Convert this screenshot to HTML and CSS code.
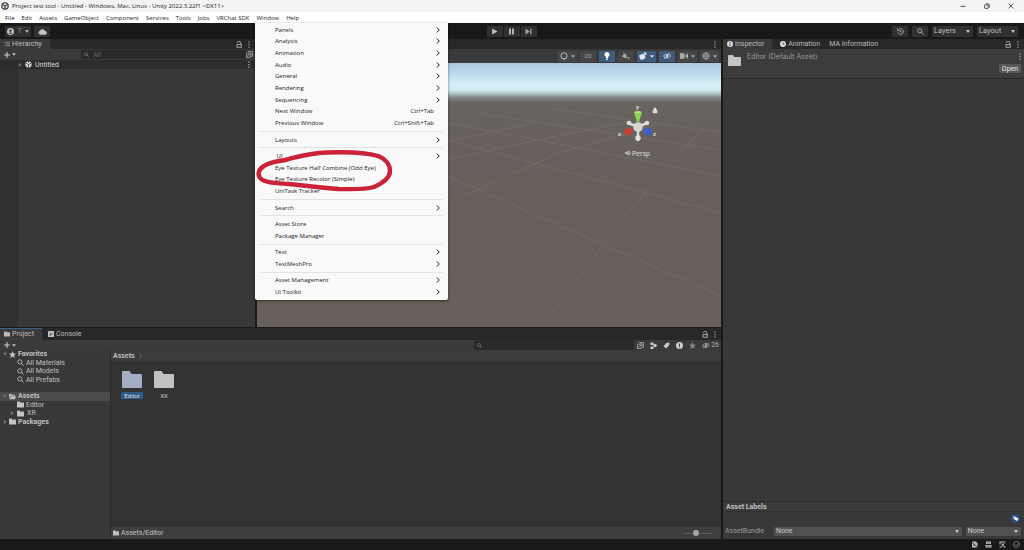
FILE: index.html
```html
<!DOCTYPE html>
<html lang="en">
<head>
<meta charset="utf-8">
<title>Project test tool - Untitled</title>
<link rel="stylesheet" href="styles.css">
</head>
<body>
<svg class="sprite" aria-hidden="true">
  <symbol id="folder" viewBox="0 0 20 17"><path d="M1 0h6.500l2 3H19q1 0 1 1v12q0 1-1 1H1q-1 0-1-1V1q0-1 1-1z" fill="currentColor"/></symbol>
  <symbol id="folder-open" viewBox="0 0 20 16"><path d="M0 13V1h7l2 2h8v3H5z" fill="currentColor"/><path d="M5.500 7H20l-3 9H1z" fill="currentColor"/></symbol>
  <symbol id="search" viewBox="0 0 16 16"><circle cx="6.500" cy="6.500" r="4.800" fill="none" stroke="currentColor" stroke-width="1.800"/><path d="M10 10l5 5" stroke="currentColor" stroke-width="2.200"/></symbol>
  <symbol id="lock" viewBox="0 0 12 14"><path d="M2.500 4V3q0-2 3.500-2t3.500 2v4" fill="none" stroke="currentColor" stroke-width="1.600"/><rect x="2" y="7" width="8.500" height="5.500" fill="none" stroke="currentColor" stroke-width="1.600"/></symbol>
  <symbol id="dots" viewBox="0 0 4 14"><path d="M1 1h2v2.500H1zM1 6h2v2.500H1zM1 11h2v2.500H1z" fill="currentColor"/></symbol>
  <symbol id="fold" viewBox="0 0 10 10"><path d="M2 0l7 5-7 5z" fill="currentColor"/></symbol>
  <symbol id="down" viewBox="0 0 10 6"><path d="M0 0h10L5 6z" fill="currentColor"/></symbol>
  <symbol id="pick" viewBox="0 0 16 16"><path d="M4 1h11v11H8M1 5v10h9" fill="none" stroke="currentColor" stroke-width="1.500"/><circle cx="9" cy="6" r="2.300" fill="none" stroke="currentColor" stroke-width="1.500"/><path d="M7 8l-5 5M3 5h3M11 9h3" stroke="currentColor" stroke-width="1.500"/></symbol>
  <symbol id="chev" viewBox="0 0 8 12"><path d="M1.500 1l5 5-5 5" fill="none" stroke="currentColor" stroke-width="2"/></symbol>
  <symbol id="eye-off" viewBox="0 0 20 16"><path d="M1 8q9-10 18 0-9 10-18 0z" fill="none" stroke="currentColor" stroke-width="2"/><circle cx="10" cy="8" r="3" fill="currentColor"/><path d="M3 15L17 1" stroke="currentColor" stroke-width="2"/></symbol>
  <symbol id="unity" viewBox="0 0 20 20"><path d="M10 0l8.700 5v10L10 20l-8.700-5V5z" fill="currentColor"/><path d="M10 10V20M10 10L1 5M10 10l9-5M10 0v5M1 15l4-2M19 15l-4-2" stroke="#2a2a2a" stroke-width="2.400"/></symbol>
  <symbol id="star" viewBox="0 0 20 20"><path d="M10 0l3 6.800 7 .7-5.300 4.800L16.300 20 10 16l-6.300 4 1.600-7.700L0 7.500l7-.7z" fill="currentColor"/></symbol>
  <symbol id="tag" viewBox="0 0 20 16"><path d="M1 1h7l11 9-6 6L1 8z" fill="currentColor"/><circle cx="4.500" cy="4.500" r="1.500" fill="#25364d"/></symbol>
</svg>

<header class="titlebar">
  <svg class="app-icon" viewBox="0 0 16 16"><circle cx="8" cy="8" r="7.500" fill="#333"/><path d="M8 2l5 3v6l-5 3-5-3V5z" fill="#ddd"/><path d="M8 8v6M8 8L3 5M8 8l5-3" stroke="#333" stroke-width="2"/></svg>
  <h1>Project test tool - Untitled - Windows, Mac, Linux - Unity 2022.3.22f1 &lt;DX11&gt;</h1>
  <div class="window-controls">
    <button aria-label="Minimize"><svg viewBox="0 0 10 10"><path d="M1 5.500h8" stroke="#333" stroke-width="1.500"/></svg></button>
    <button aria-label="Restore"><svg viewBox="0 0 10 10"><rect x="1" y="3" width="6" height="6" rx="1" fill="none" stroke="#333" stroke-width="1.400"/><path d="M3 1.500h4q2 0 2 2v4" fill="none" stroke="#333" stroke-width="1.300"/></svg></button>
    <button aria-label="Close"><svg viewBox="0 0 10 10"><path d="M1 1l8 8M9 1L1 9" stroke="#333" stroke-width="1.300"/></svg></button>
  </div>
</header>

<nav class="menubar" aria-label="Main">
  <button>File</button><button>Edit</button><button>Assets</button><button>GameObject</button><button>Component</button><button>Services</button><button>Tools</button><button>Jobs</button><button>VRChat SDK</button><button>Window</button><button>Help</button>
  <div class="popup" role="menu" aria-label="Window">
    <button role="menuitem">Panels<svg><use href="#chev"/></svg></button>
    <button role="menuitem">Analysis<svg><use href="#chev"/></svg></button>
    <button role="menuitem">Animation<svg><use href="#chev"/></svg></button>
    <button role="menuitem">Audio<svg><use href="#chev"/></svg></button>
    <button role="menuitem">General<svg><use href="#chev"/></svg></button>
    <button role="menuitem">Rendering<svg><use href="#chev"/></svg></button>
    <button role="menuitem">Sequencing<svg><use href="#chev"/></svg></button>
    <button role="menuitem">Next Window<kbd>Ctrl+Tab</kbd></button>
    <button role="menuitem">Previous Window<kbd>Ctrl+Shift+Tab</kbd></button>
    <hr>
    <button role="menuitem">Layouts<svg><use href="#chev"/></svg></button>
    <hr>
    <button role="menuitem">&nbsp;UI<svg><use href="#chev"/></svg></button>
    <button role="menuitem">Eye Texture Half Combine (Odd Eye)</button>
    <button role="menuitem">Eye Texture Recolor (Simple)</button>
    <button role="menuitem">UniTask Tracker</button>
    <hr>
    <button role="menuitem">Search<svg><use href="#chev"/></svg></button>
    <hr>
    <button role="menuitem">Asset Store</button>
    <button role="menuitem">Package Manager</button>
    <hr>
    <button role="menuitem">Text<svg><use href="#chev"/></svg></button>
    <button role="menuitem">TextMeshPro<svg><use href="#chev"/></svg></button>
    <hr>
    <button role="menuitem">Asset Management<svg><use href="#chev"/></svg></button>
    <button role="menuitem">UI Toolkit<svg><use href="#chev"/></svg></button>
    <svg class="marker" viewBox="0 0 193 277"><path d="M30 137C42 134 54 130 72 129.500C98 128.500 113 130 123 133C131 136 135 142 135 148C135 155 128 160 119 164C108 167 95 166 84 166C66 165 45 162 34 161C22 160 9 160 5 155C2 151 4 146 9 143C15 139 22 138 31 137" fill="none" stroke="#ca2236" stroke-width="4.400" stroke-linecap="round" stroke-linejoin="round"/></svg>
  </div>
</nav>

<div class="toolbar">
  <div class="group">
    <button class="tool account" aria-label="Account"><svg class="i7" viewBox="0 0 16 16"><circle cx="8" cy="8" r="8" fill="#c4c4c4"/><circle cx="8" cy="6" r="2.800" fill="#303030"/><path d="M3 13q5-6 10 0z" fill="#303030"/></svg>T<svg class="caret"><use href="#down"/></svg></button>
    <button class="tool cloud" aria-label="Cloud"><svg viewBox="0 0 20 14"><path d="M5 14a4.500 4.500 0 0 1-.5-8.800A6 6 0 0 1 15.500 6 4 4 0 0 1 16 14z" fill="#c4c4c4"/></svg></button>
  </div>
  <div class="group play">
    <button class="tool" aria-label="Play"><svg viewBox="0 0 12 12"><path d="M2 1l9 5-9 5z" fill="#c4c4c4"/></svg></button>
    <button class="tool" aria-label="Pause"><svg viewBox="0 0 12 12"><path d="M2 1h3v10H2zM7 1h3v10H7z" fill="#c4c4c4"/></svg></button>
    <button class="tool" aria-label="Step"><svg viewBox="0 0 12 12"><path d="M1 1l7 5-7 5zM9 1h2v10H9z" fill="#a8a8a8"/></svg></button>
  </div>
  <div class="group end">
    <button class="tool" aria-label="History"><svg viewBox="0 0 16 16"><path d="M3 4a6.500 6.500 0 1 1-1 6M1 1v5h5M8 4.500V9h3" fill="none" stroke="#c4c4c4" stroke-width="1.600"/></svg></button>
    <button class="tool" aria-label="Search"><svg><use href="#search"/></svg></button>
    <span class="select"><select aria-label="Layers"><option>Layers</option></select></span>
    <span class="select"><select aria-label="Layout"><option>Layout</option></select></span>
  </div>
</div>

<main class="workspace">
  <div class="left">
    <div class="upper">
      <section class="hierarchy">
        <div class="tabs">
          <button class="tab active"><svg class="i6" viewBox="0 0 14 12"><path d="M0 2h3M4 2h10M2 6h2M5 6h9M2 10h2M5 10h9" stroke="#aaa" stroke-width="1.500"/></svg>Hierarchy</button>
          <div class="tab-tools"><svg class="lock"><use href="#lock"/></svg><svg class="dots"><use href="#dots"/></svg></div>
        </div>
        <div class="subbar">
          <button class="add" aria-label="Create"><svg viewBox="0 0 10 10"><path d="M5 0v10M0 5h10" stroke="#ccc" stroke-width="1.800"/></svg><svg class="caret"><use href="#down"/></svg></button>
          <label class="find"><svg><use href="#search"/></svg><input type="text" placeholder="All" aria-label="Search hierarchy"></label>
          <svg class="i7"><use href="#pick"/></svg>
        </div>
        <div class="scene-tree">
          <div class="scene-row"><svg class="fold"><use href="#fold"/></svg><svg class="i7 white"><use href="#unity"/></svg><span>Untitled</span><svg class="dots"><use href="#dots"/></svg></div>
        </div>
      </section>
      <section class="scene">
        <div class="tabs"><div class="tab-tools"><svg class="dots"><use href="#dots"/></svg></div></div>
        <div class="scene-tools">
          <button class="wide" aria-label="Shading"><svg viewBox="0 0 14 14"><circle cx="7" cy="7" r="5.500" fill="none" stroke="#c4c4c4" stroke-width="1.600"/><path d="M12 8a5.500 5.500 0 0 1-8 4q6 0 8-4z" fill="#c4c4c4"/></svg><svg class="caret"><use href="#down"/></svg></button>
          <button>2D</button>
          <button class="on" aria-label="Lighting"><svg viewBox="0 0 14 14"><path d="M7 0a4.500 4.500 0 0 1 2 8.500V11H5V8.500A4.500 4.500 0 0 1 7 0zM5.500 12h3v2h-3z" fill="#fff"/></svg></button>
          <button aria-label="Audio"><svg viewBox="0 0 14 14"><path d="M1 5h2l4-3v10L3 9H1z" fill="#aaa"/><path d="M2 1l11 12M9 10h4" stroke="#aaa" stroke-width="1.400"/></svg></button>
          <button class="on wide" aria-label="Effects"><svg viewBox="0 0 14 14"><path d="M0 6l6-3 5 3v4l-3 3H2zM8 1h5v4H9z" fill="#e0e8f0"/></svg><svg class="caret"><use href="#down"/></svg></button>
          <button class="on" aria-label="Hidden objects"><svg><use href="#eye-off"/></svg></button>
          <button class="wide" aria-label="Camera"><svg viewBox="0 0 14 14"><path d="M0 2h8v10H0zM9 6l5-4v10L9 8z" fill="#aaa"/></svg><svg class="caret"><use href="#down"/></svg></button>
          <button class="wide" aria-label="Gizmos"><svg viewBox="0 0 14 14"><circle cx="7" cy="7" r="5.500" fill="none" stroke="#aaa" stroke-width="1.500"/><path d="M1 7h12M7 1q-5 6 0 12M7 1q5 6 0 12" fill="none" stroke="#aaa" stroke-width="1.400"/></svg><svg class="caret"><use href="#down"/></svg></button>
        </div>
        <svg class="viewport" viewBox="0 0 464 264" preserveAspectRatio="xMaxYMin slice" aria-label="Scene view">
          <defs><linearGradient id="sky" x1="0" y1="0" x2="0" y2="1">
            <stop offset="0" stop-color="#a9c7e2"/><stop offset=".04" stop-color="#bcd9ec"/><stop offset=".08" stop-color="#d4eff6"/><stop offset=".1" stop-color="#d3eff2"/><stop offset=".115" stop-color="#b3c6c8"/><stop offset=".13" stop-color="#858888"/><stop offset=".15" stop-color="#696461"/><stop offset=".3" stop-color="#67605c"/><stop offset="1" stop-color="#68605a"/>
          </linearGradient></defs>
          <rect width="464" height="264" fill="url(#sky)"/>
          <g fill="none" stroke="#837b75" stroke-width=".8" opacity=".5">
            <path d="M183 110L464 233M183 75L464 150M183 58L464 113M220 50L464 87M290 45L464 69M183 143L300 91L400 61M183 98L300 73L380 57M183 80L270 61M285 264L370 150L448 63"/>
          </g>
          <g fill="none" stroke="#7b736e" stroke-width=".5" opacity=".3"><path d="M183 125L464 245M183 140L464 262M240 264L340 150L400 90M340 264L410 150L464 80M183 160L320 100M183 200L330 120L440 80M183 67L464 125M183 82L464 168"/></g>
          <g>
            <path d="M371 60L381 64L390 60M381 64V77" fill="none" stroke="#ddd" stroke-width="2.500" stroke-linecap="round"/>
            <circle cx="372" cy="60" r="2.300" fill="#ddd"/><circle cx="390" cy="60" r="2.300" fill="#ddd"/><circle cx="381" cy="75" r="2.700" fill="#e2e2e2"/>
            <path d="M377 49h8l-3 10h-2z" fill="#8bd553"/><path d="M377 49q4-2 8 0-4 2-8 0" fill="#b1e989"/>
            <path d="M377 66l-8-1q-3 3-1 6l4 2z" fill="#c64036"/><path d="M385 66l8-1q3 3 1 6l-4 2z" fill="#3961c7"/><circle cx="381" cy="64" r="4.800" fill="#d6d4d4"/>
            <text class="axis" x="379" y="46">y</text><text class="axis" x="361" y="73">x</text><text class="axis" x="396" y="73">z</text>
            <path d="M396 47h4v3h-4zM397 47v-2h2v2" fill="#ddd" stroke="#ddd" stroke-width=".5"/>
            <path d="M373 88l-5 2 5 2M370 90h4" fill="none" stroke="#ddd" stroke-width=".8"/><text class="persp" x="375" y="93">Persp</text>
          </g>
        </svg>
      </section>
    </div>
    <section class="project">
      <div class="tabs">
        <button class="tab active focus"><svg class="i6"><use href="#folder"/></svg>Project</button>
        <button class="tab console"><svg class="i6" viewBox="0 0 12 12"><rect width="12" height="12" rx="1" fill="#c4c4c4"/><path d="M3 4h6M3 7h6M3 9h3" stroke="#333" stroke-width="1.200"/></svg>Console</button>
        <div class="tab-tools"><svg class="lock"><use href="#lock"/></svg><svg class="dots"><use href="#dots"/></svg></div>
      </div>
      <div class="subbar">
        <button class="add" aria-label="Create asset"><svg viewBox="0 0 10 10"><path d="M5 0v10M0 5h10" stroke="#ccc" stroke-width="1.800"/></svg><svg class="caret"><use href="#down"/></svg></button>
        <label class="find assets"><svg><use href="#search"/></svg><input type="text" aria-label="Search project"></label>
        <div class="filters">
          <button aria-label="Search by window"><svg><use href="#pick"/></svg></button>
          <button aria-label="Search by type"><svg viewBox="0 0 14 14"><path d="M1 1h6v5H1zM1 9h6v5H1z" fill="currentColor"/><circle cx="10" cy="7" r="3.500" fill="currentColor"/></svg></button>
          <button aria-label="Search by label"><svg viewBox="0 0 14 14"><path d="M1 8l6-6 6-1-1 6-6 6z" fill="currentColor"/></svg></button>
          <button aria-label="Search by log"><svg viewBox="0 0 14 14"><circle cx="7" cy="7" r="7" fill="currentColor"/><path d="M6 3h2v5H6zM6 9h2v2H6z" fill="#333"/></svg></button>
          <button class="dim" aria-label="Save search"><svg><use href="#star"/></svg></button>
          <button class="hidden-count"><svg><use href="#eye-off"/></svg>26</button>
        </div>
      </div>
      <div class="browser">
        <div class="tree">
          <div class="node head"><svg class="fold open"><use href="#fold"/></svg><svg class="i7"><use href="#star"/></svg>Favorites</div>
          <div class="node leaf"><svg class="i7"><use href="#search"/></svg>All Materials</div>
          <div class="node leaf"><svg class="i7"><use href="#search"/></svg>All Models</div>
          <div class="node leaf"><svg class="i7"><use href="#search"/></svg>All Prefabs</div>
          <div class="node"></div>
          <div class="node head selected"><svg class="fold open"><use href="#fold"/></svg><svg class="i7"><use href="#folder-open"/></svg>Assets</div>
          <div class="node leaf"><svg class="i7"><use href="#folder"/></svg>Editor</div>
          <div class="node child"><svg class="fold"><use href="#fold"/></svg><svg class="i7"><use href="#folder"/></svg>XR</div>
          <div class="node head"><svg class="fold"><use href="#fold"/></svg><svg class="i7"><use href="#folder"/></svg>Packages</div>
        </div>
        <div class="content">
          <div class="crumbs">Assets<svg><use href="#chev"/></svg></div>
          <div class="grid">
            <button class="asset chosen"><svg><use href="#folder"/></svg><span>Editor</span></button>
            <button class="asset"><svg><use href="#folder"/></svg><span>XR</span></button>
          </div>
          <div class="path"><svg class="i6"><use href="#folder"/></svg>Assets/Editor<input type="range" min="0" max="100" value="43" aria-label="Icon size"></div>
        </div>
      </div>
    </section>
  </div>

  <section class="inspector">
    <div class="tabs">
      <button class="tab active"><svg class="i6" viewBox="0 0 14 14"><circle cx="7" cy="7" r="7" fill="#ddd"/><path d="M6 2.500h2v2H6zM6 6h2v5.500H6z" fill="#333"/></svg>Inspector</button>
      <button class="tab second"><svg class="i6" viewBox="0 0 14 14"><circle cx="7" cy="7" r="7" fill="#ddd"/><path d="M7 3v4.500h4" fill="none" stroke="#333" stroke-width="1.800"/></svg>Animation</button>
      <button class="tab third">MA Information</button>
      <div class="tab-tools"><svg class="lock"><use href="#lock"/></svg><svg class="dots"><use href="#dots"/></svg></div>
    </div>
    <div class="asset-head">
      <svg class="big-folder"><use href="#folder"/></svg>
      <h2>Editor (Default Asset)</h2>
      <div class="actions"><svg class="dots"><use href="#dots"/></svg><button>Open</button></div>
    </div>
    <div class="inspector-body"></div>
    <div class="labels">
      <h3>Asset Labels</h3>
      <div class="tag-row"><button aria-label="Add label"><svg><use href="#tag"/></svg></button></div>
      <div class="bundle">
        <label for="bundle">AssetBundle</label>
        <span class="select main"><select id="bundle"><option>None</option></select></span>
        <span class="select variant"><select aria-label="AssetBundle variant"><option>None</option></select></span>
      </div>
    </div>
  </section>
</main>

<footer class="status">
  <svg viewBox="0 0 14 14"><path d="M2 1h8l3 4v8H2z" fill="#bbb"/><path d="M2 2l10 10M4 8h3" stroke="#222" stroke-width="1.600"/></svg>
  <svg viewBox="0 0 14 14"><path d="M2 1h10v5H2zM1 8h12v5H1z" fill="#bbb"/><path d="M4 4h6M3 10h8" stroke="#333" stroke-width="1.200"/></svg>
  <svg viewBox="0 0 14 14"><path d="M1 2h12M1 12h4M9 12h4M4 5l7 6M11 4l-6 8M2 2v5" stroke="#bbb" stroke-width="2"/></svg>
  <svg viewBox="0 0 14 14"><circle cx="7" cy="7" r="6" fill="none" stroke="#999" stroke-width="1.400"/><path d="M4 7l3 3 4-5" fill="none" stroke="#999" stroke-width="1.600"/></svg>
</footer>
</body>
</html>
```
FILE: styles.css
```css
* { box-sizing: border-box; }
body {
  margin: 0;
  min-height: 100vh;
  display: flex;
  flex-direction: column;
  background: #191919;
  color: #c0c0c0;
  font: 7px/8px Roboto, sans-serif;
}
button, input, select {
  font: inherit;
  color: inherit;
  background: none;
  border: 0;
  margin: 0;
  padding: 0;
  appearance: none;
}
h1, h2, h3 { margin: 0; font: inherit; }
svg { flex: none; display: block; }
.sprite { width: 0; height: 0; position: absolute; }
.i6 { width: 6px; height: 6px; }
.i7 { width: 7px; height: 7px; }
.caret { width: 5px; height: 3px; }
.dots { width: 2px; height: 7px; }
.lock { width: 6px; height: 7px; }
.white { color: #eee; }

/* Window chrome */
.titlebar, .menubar {
  display: flex;
  align-items: center;
  color: #222;
  font-family: "Open Sans", sans-serif;
  font-size: 6px;
}
.titlebar {
  height: 12px;
  gap: 3px;
  padding: 0 10px 0 1px;
  background: #f3f3f3;
}
.app-icon { width: 8px; height: 8px; }
.window-controls { margin-left: auto; display: flex; gap: 18px; }
.window-controls svg { width: 6px; height: 6px; }
.menubar {
  position: relative;
  height: 11px;
  gap: 7px;
  padding: 0 5px;
  background: #fff;
}
.popup {
  position: absolute;
  z-index: 2;
  left: 255px;
  top: 11px;
  width: 193px;
  height: 277px;
  padding: 1px 0 2px;
  display: flex;
  flex-direction: column;
  background: #f9f9f9;
  border-radius: 0 0 2px 2px;
  box-shadow: 0 1px 3px #0008;
}
.popup button {
  flex: 12 0 0;
  display: flex;
  align-items: center;
  justify-content: space-between;
  padding: 0 8px 0 20px;
  line-height: 8px;
  text-align: left;
}
.popup button svg { width: 4px; height: 6px; }
.popup kbd { font: inherit; padding-right: 6px; }
.popup hr {
  flex: 5 0 0;
  width: 183px;
  margin: 0 auto;
  border: 0;
  background: linear-gradient(#e2e2e2, #e2e2e2) center / 100% 1px no-repeat;
}
.marker { position: absolute; inset: 0; pointer-events: none; }

/* Editor toolbar */
.toolbar {
  height: 16px;
  display: grid;
  grid-template-columns: 1fr auto 1fr;
  align-items: center;
  padding: 0 6px 0 5px;
}
.group { display: flex; gap: 3px; }
.group.play { gap: 1px; }
.group.end { justify-content: flex-end; gap: 4px; }
.tool {
  width: 16px;
  height: 11px;
  display: flex;
  align-items: center;
  justify-content: center;
  background: #303030;
  border-radius: 1px;
}
.tool svg { width: 7px; height: 7px; }
.tool .caret { width: 4px; height: 3px; }
.account { width: 26px; gap: 3px; color: #888; }
.account .caret { color: #c4c4c4; }
.cloud svg { width: 9px; height: 7px; }
.select {
  position: relative;
  width: 41px;
  height: 11px;
  background: #303030;
  border-radius: 1px;
}
.select::after {
  content: "";
  position: absolute;
  right: 3px;
  top: 4px;
  border: 2px solid transparent;
  border-top: 3px solid #c4c4c4;
  pointer-events: none;
}
.select select { width: 100%; height: 100%; padding-left: 2px; }
.toolbar .select { font-family: Inter, sans-serif; }

/* Panels */
.workspace {
  flex: 1;
  display: grid;
  grid-template-columns: 721fr 301fr;
  gap: 2px;
}
.left { display: grid; grid-template-rows: 288fr 211fr; gap: 1px; min-width: 0; }
.upper { display: grid; grid-template-columns: 255fr 464fr; gap: 2px; min-height: 0; }
.hierarchy, .scene, .project, .inspector { display: flex; flex-direction: column; min-width: 0; min-height: 0; background: #383838; }
.tabs {
  height: 10px;
  flex: none;
  display: flex;
  align-items: stretch;
  padding-right: 5px;
  background: #282828;
}
.tab { display: flex; align-items: center; gap: 2px; padding: 0 8px 0 4px; color: #bbb; }
.tab.active { background: #3a3a3a; }
.tab.focus { box-shadow: inset 0 1px #3a6085; }
.tab-tools { margin-left: auto; display: flex; align-items: center; gap: 6px; }
.subbar {
  height: 11px;
  flex: none;
  display: flex;
  align-items: center;
  justify-content: space-between;
  background: #3a3a3a;
  padding: 0 2px 0 4px;
}
.add { display: flex; align-items: center; gap: 2px; }
.add svg { width: 6px; height: 6px; }
.add .caret { width: 4px; height: 3px; }
.find {
  flex: 0 1 165px;
  margin-left: auto;
  height: 9px;
  display: flex;
  align-items: center;
  gap: 4px;
  padding-left: 3px;
  background: #2a2a2a;
  color: #888;
}
.find svg { width: 5px; height: 5px; }
.find input { width: 100%; min-width: 0; }
.find input::placeholder { color: #666; }
.scene-tree { flex: 1; background: linear-gradient(90deg, #313131 18px, #383838 18px); }
.scene-row {
  display: flex;
  align-items: center;
  gap: 3px;
  height: 9px;
  padding: 0 5px 0 18px;
  background: #2c2c2c;
  color: #ddd;
}
.scene-row .dots { margin-left: auto; }
.fold { width: 4px; height: 4px; color: #777; }
.fold.open { transform: rotate(90deg); }

/* Scene */
.scene-tools {
  height: 14px;
  display: flex;
  align-items: center;
  justify-content: flex-end;
  gap: 3px;
  padding-right: 2px;
  background: #3a3a3a;
  color: #aaa;
}
.scene-tools button {
  width: 16px;
  height: 11px;
  display: flex;
  align-items: center;
  justify-content: center;
  gap: 3px;
  background: #464646;
  font-size: 6px;
}
.scene-tools .wide { width: 19px; }
.scene-tools .on { background: #405c7c; color: #dde; }
.scene-tools svg { width: 8px; height: 8px; }
.scene-tools .caret { width: 4px; height: 3px; }
.viewport { flex: 1; width: 100%; height: 0; min-height: 0; }
.axis { font-size: 6px; font-weight: 700; fill: #ddd; }
.persp { font-size: 7px; fill: #ddd; }

/* Project */
.project .tabs { height: 12px; }
.project .console { padding-left: 6px; }
.project .subbar { height: 10px; }
.project .find { flex: 0 0 160px; height: 10px; }
.filters { display: flex; align-items: center; gap: 6px; padding-left: 3px; color: #ccc; }
.filters svg { width: 7px; height: 7px; }
.filters .dim { color: #888; }
.filters .hidden-count { display: flex; align-items: center; gap: 1px; color: #aaa; }
.filters .hidden-count svg { width: 8px; }
.browser { flex: 1; display: flex; min-height: 0; }
.tree {
  flex: 0 0 110px;
  height: 76px;
  display: grid;
  grid-auto-rows: 1fr;
}
.node { display: flex; align-items: center; gap: 2px; padding-left: 17px; }
.node .i7 { color: #c4c4c4; }
.node.head { padding-left: 3px; font-weight: 700; }
.node.child { padding-left: 10px; gap: 3px; }
.node.selected { background: #4b4b4b; }
.content { flex: 1; display: flex; flex-direction: column; border-left: 1px solid #2a2a2a; background: #333; }
.crumbs {
  height: 11px;
  display: flex;
  align-items: center;
  gap: 4px;
  padding-left: 2px;
  background: #3c3c3c;
  font-weight: 600;
}
.crumbs svg { width: 3px; height: 5px; color: #888; }
.grid { flex: 1; display: flex; align-items: flex-start; gap: 10px; padding: 10px; }
.asset { width: 22px; display: flex; flex-direction: column; align-items: center; gap: 4px; font-size: 6px; line-height: 7px; }
.asset svg { width: 20px; height: 17px; color: #c2c2c2; }
.asset span { padding: 0 3px; border-radius: 1px; }
.asset.chosen svg { color: #a3aec5; }
.asset.chosen span { background: #2c5d87; color: #ddd; }
.path { height: 12px; display: flex; align-items: center; gap: 2px; padding: 0 8px 0 2px; background: #3f3f3f; }
.path input {
  width: 30px;
  height: 6px;
  margin-left: auto;
  background: linear-gradient(#5a5a5a, #5a5a5a) center / 100% 1px no-repeat;
}
.path input::-webkit-slider-thumb { appearance: none; width: 6px; height: 6px; border-radius: 50%; background: #a5a5a5; }

/* Inspector */
.inspector .second { padding: 0 7px 0 8px; }
.inspector .third { padding-left: 2px; }
.asset-head {
  display: flex;
  align-items: flex-start;
  gap: 6px;
  min-height: 30px;
  padding: 4px 3px 0 5px;
  background: #3c3c3c;
  border-bottom: 1px solid #2a2a2a;
}
.big-folder { width: 13px; height: 11px; margin-top: 2px; color: #c4c4c4; }
.asset-head h2 { color: #999; font-family: Inter, sans-serif; }
.actions { margin-left: auto; display: flex; flex-direction: column; align-items: flex-end; gap: 4px; }
.actions button { width: 22px; height: 9px; background: #585858; border-radius: 1px; color: #eee; }
.inspector-body { flex: 1; }
.labels h3 {
  height: 11px;
  padding: 1px 3px;
  border-top: 1px solid #2c2c2c;
  border-bottom: 1px solid #303030;
  background: #3c3c3c;
  font-weight: 700;
}
.tag-row { height: 13px; display: flex; align-items: center; justify-content: flex-end; padding-right: 4px; }
.tag-row button { width: 9px; height: 9px; display: grid; place-items: center; border-radius: 50%; background: #274d85; color: #fff; }
.tag-row svg { width: 6px; height: 5px; }
.bundle { display: flex; align-items: center; gap: 4px; height: 14px; padding: 0 3px 2px 2px; color: #999; }
.bundle label { width: 45px; }
.bundle .select { height: 9px; background: #515151; color: #ccc; }
.bundle .select::after { top: 3px; }
.bundle .main { flex: 187; }
.bundle .variant { flex: 55; }

.status { height: 11px; display: flex; align-items: center; justify-content: flex-end; gap: 7px; padding-right: 4px; }
.status svg { width: 7px; height: 7px; }
```
